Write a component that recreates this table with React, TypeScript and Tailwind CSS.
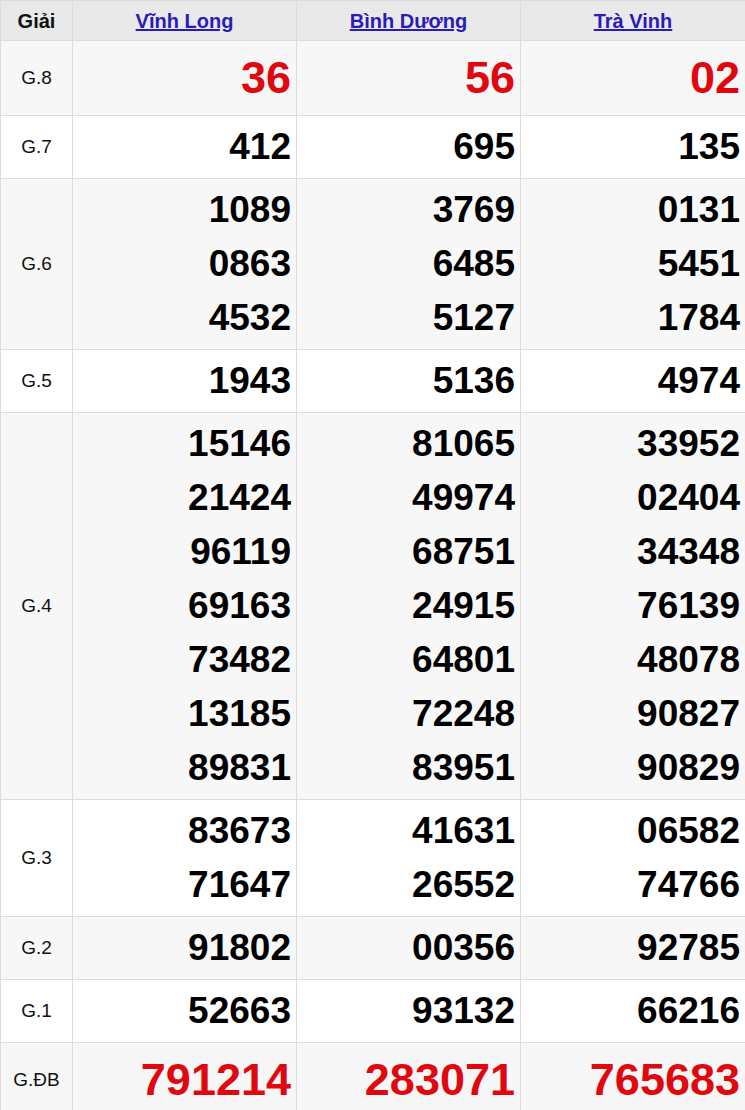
import React from "react";

type Row = { label: string; nums: string[][]; big?: boolean };

const PROVINCES = ["Vĩnh Long", "Bình Dương", "Trà Vinh"];

const ROWS: Row[] = [
  { label: "G.8", nums: [["36"], ["56"], ["02"]], big: true },
  { label: "G.7", nums: [["412"], ["695"], ["135"]] },
  {
    label: "G.6",
    nums: [
      ["1089", "0863", "4532"],
      ["3769", "6485", "5127"],
      ["0131", "5451", "1784"],
    ],
  },
  { label: "G.5", nums: [["1943"], ["5136"], ["4974"]] },
  {
    label: "G.4",
    nums: [
      ["15146", "21424", "96119", "69163", "73482", "13185", "89831"],
      ["81065", "49974", "68751", "24915", "64801", "72248", "83951"],
      ["33952", "02404", "34348", "76139", "48078", "90827", "90829"],
    ],
  },
  {
    label: "G.3",
    nums: [
      ["83673", "71647"],
      ["41631", "26552"],
      ["06582", "74766"],
    ],
  },
  { label: "G.2", nums: [["91802"], ["00356"], ["92785"]] },
  { label: "G.1", nums: [["52663"], ["93132"], ["66216"]] },
  { label: "G.ĐB", nums: [["791214"], ["283071"], ["765683"]], big: true },
];

export default function App() {
  return (
    <div className="w-[745px] bg-white font-['Liberation_Sans',Arial,sans-serif]">
      <table className="w-[745px] table-fixed border-collapse border border-[#dcdcdc]">
        <colgroup>
          <col className="w-[72px]" />
          <col className="w-[224px]" />
          <col className="w-[224px]" />
          <col className="w-[225px]" />
        </colgroup>
        <thead>
          <tr className="h-[40px] bg-[#e9e9e9]">
            <th className="border border-[#dcdcdc] text-center text-[20px] font-bold text-[#111]">
              Giải
            </th>
            {PROVINCES.map((p) => (
              <th
                key={p}
                className="border border-[#dcdcdc] text-center text-[20px] font-bold"
              >
                <a href="#" className="text-[#2b1bb8] underline">
                  {p}
                </a>
              </th>
            ))}
          </tr>
        </thead>
        <tbody>
          {ROWS.map((row, i) => (
            <tr key={row.label} className={i % 2 === 0 ? "bg-[#f7f7f7]" : "bg-white"}>
              <td className="border border-[#dcdcdc] text-center text-[19px] text-[#111]">
                {row.label}
              </td>
              {row.nums.map((col, j) => (
                <td
                  key={j}
                  className={
                    row.big
                      ? "border border-[#dcdcdc] px-[5px] py-[4px] text-right text-[45px] font-bold leading-[66px] text-[#e0080e]"
                      : "border border-[#dcdcdc] px-[5px] py-[4px] text-right text-[37px] font-bold leading-[54px] text-black"
                  }
                >
                  {col.map((n) => (
                    <div key={n}>{n}</div>
                  ))}
                </td>
              ))}
            </tr>
          ))}
        </tbody>
      </table>
    </div>
  );
}
